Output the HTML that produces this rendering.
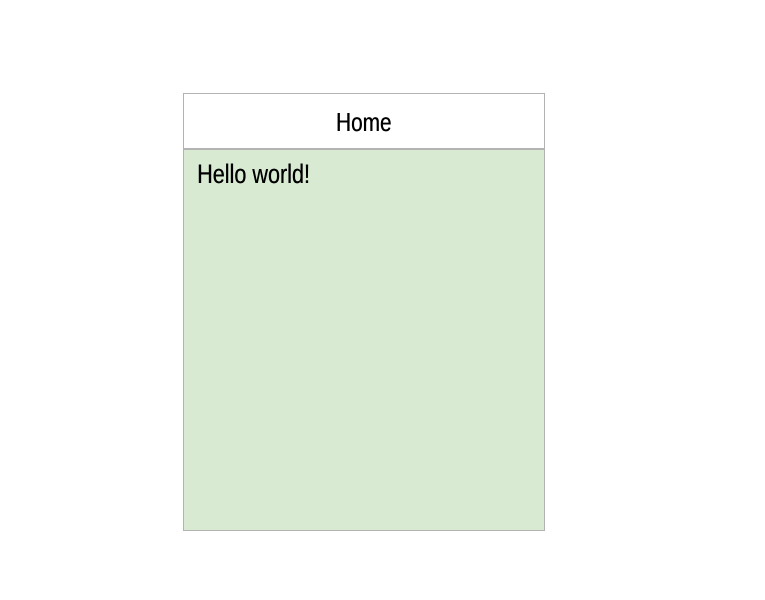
<!DOCTYPE html>
<html><head><style>
body{margin:0;background:#fff;width:765px;height:600px;position:relative;font-family:"Liberation Sans Narrow","Liberation Sans",sans-serif;}
.box{position:absolute;left:183px;top:93px;width:360px;height:436px;border:1px solid #b3b3b3;background:#d9ead3;}
.hd{height:54px;background:#fff;border-bottom:2px solid #b3b3b3;text-align:center;line-height:56px;font-size:26px;color:#000;}
.hd span,.ct span{display:inline-block;transform:scaleX(0.8);transform-origin:left;text-shadow:0.4px 0 0 #000;}
.ct{padding:9px 0 0 13px;font-size:27px;color:#000;}
</style></head><body>
<div class="box"><div class="hd"><span style="transform-origin:center">Home</span></div><div class="ct"><span>Hello world!</span></div></div>
</body></html>
